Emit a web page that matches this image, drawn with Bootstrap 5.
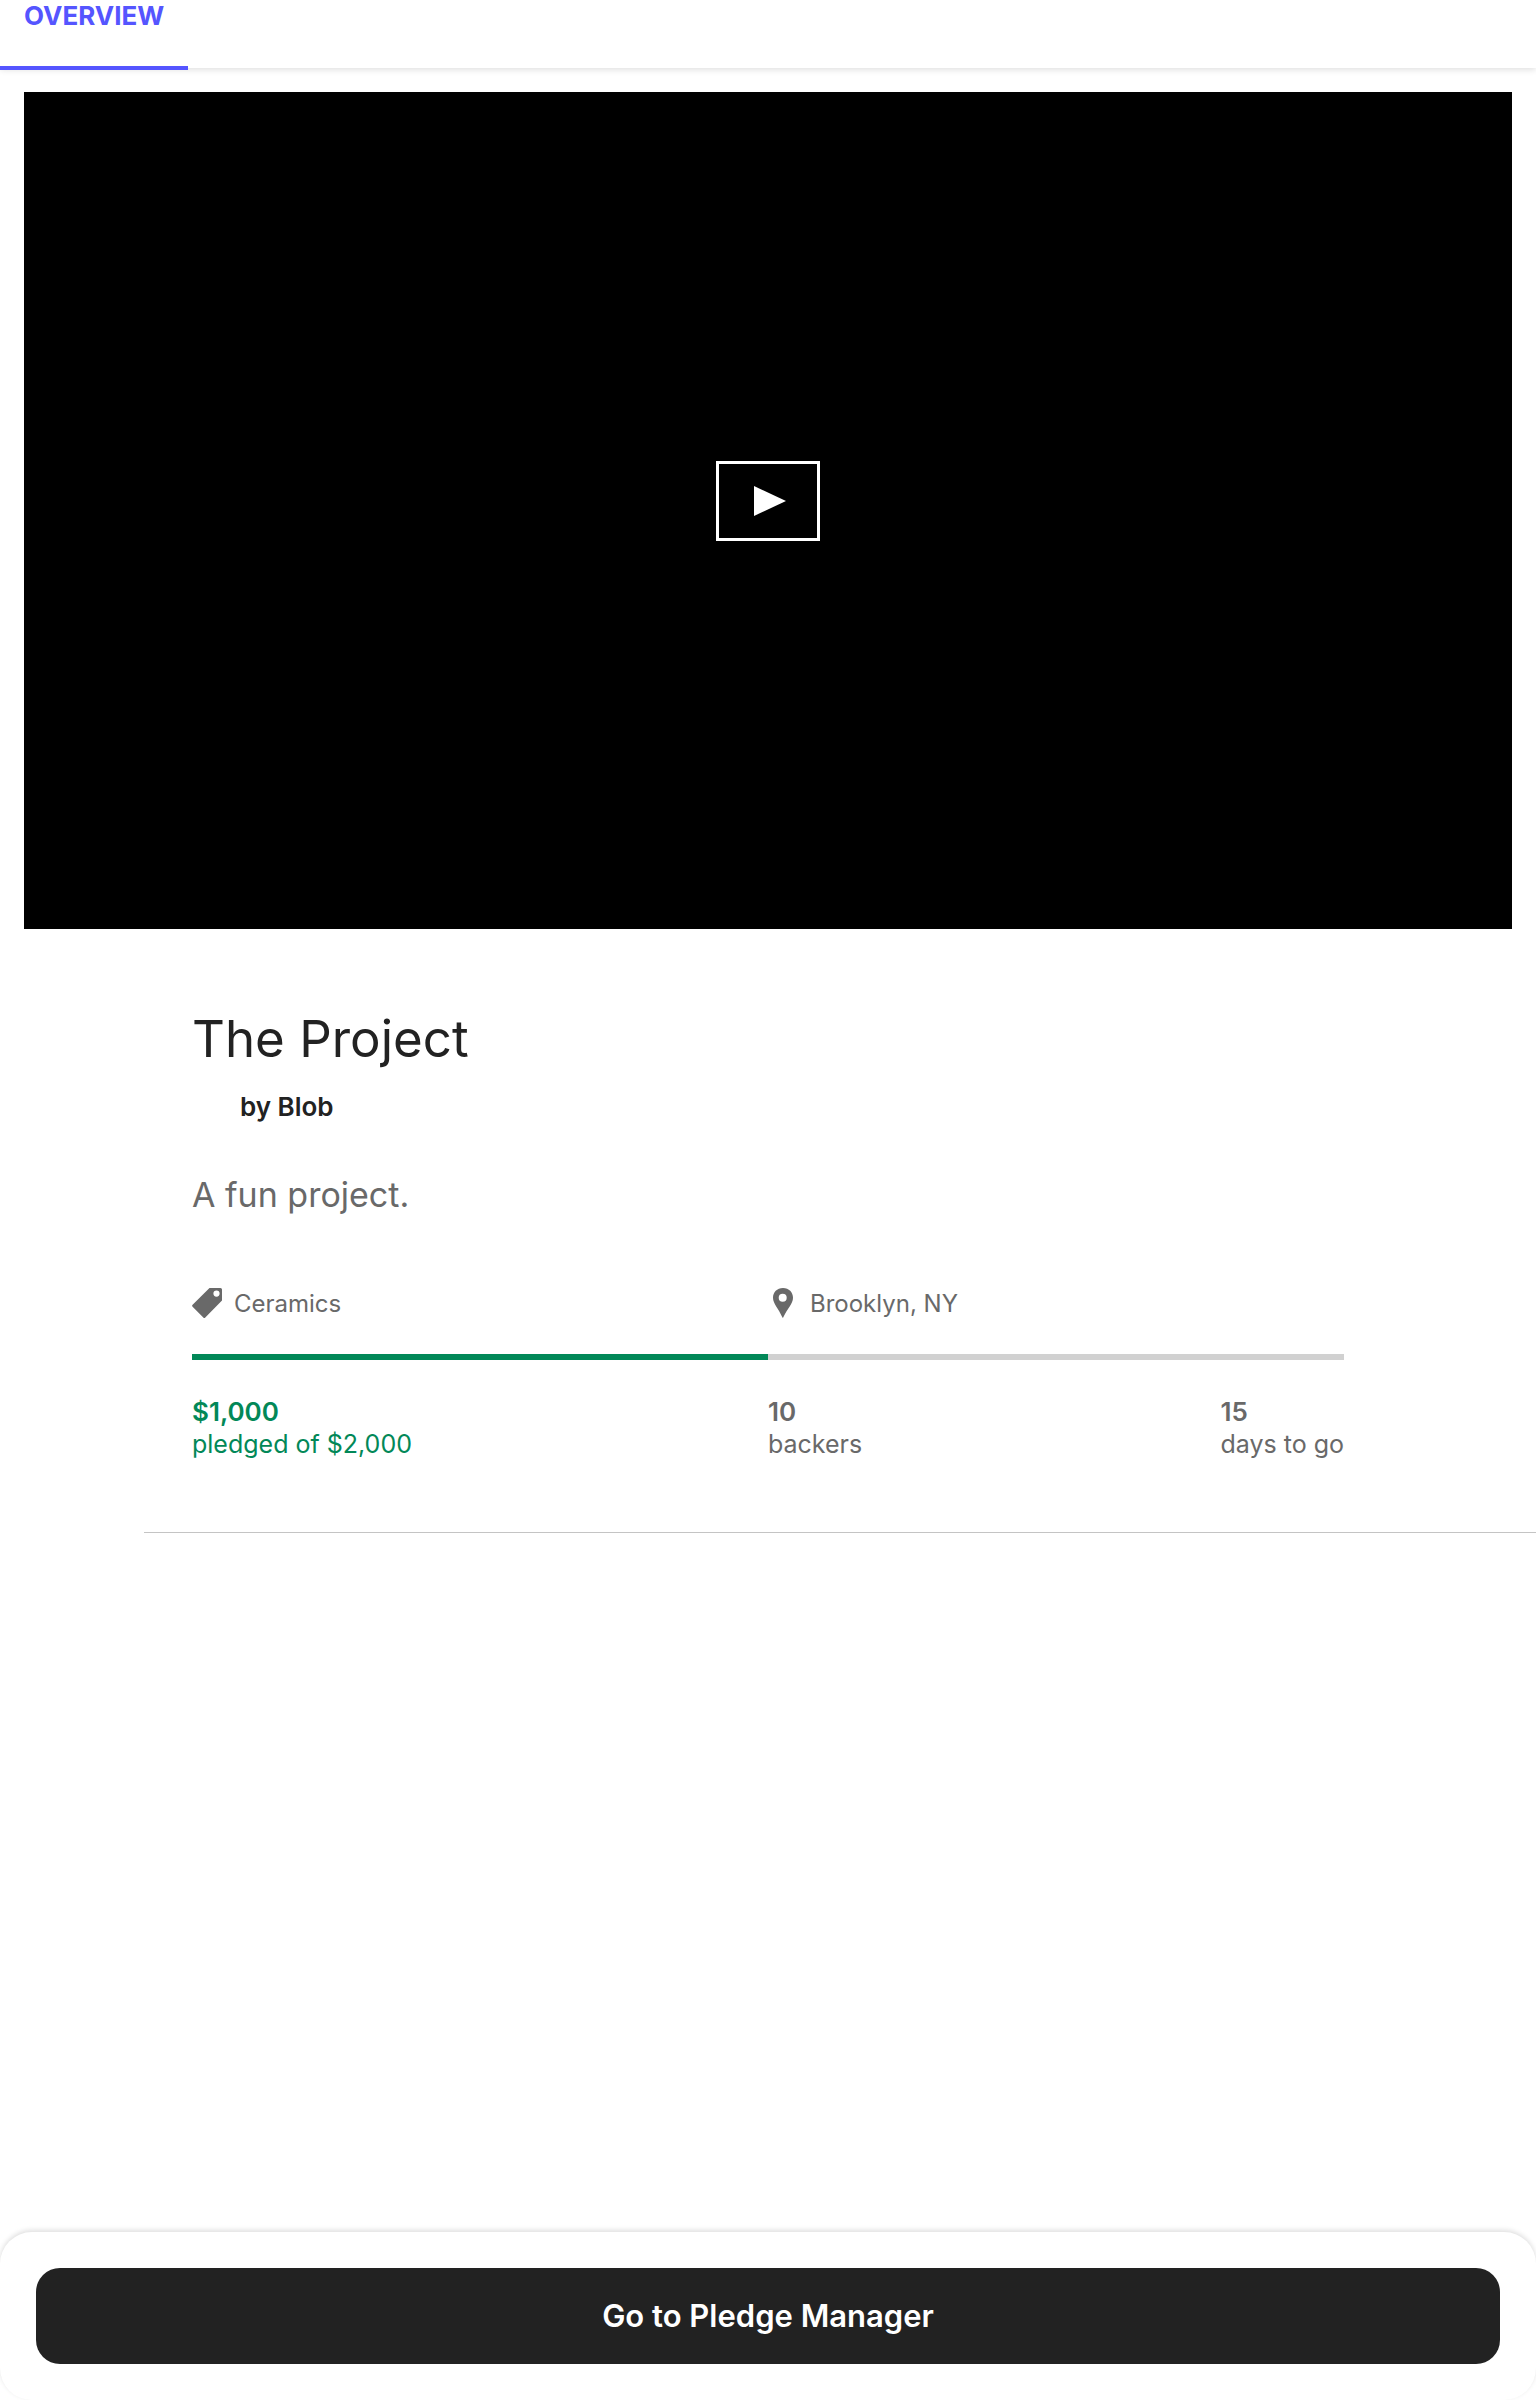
<!DOCTYPE html>
<html lang="en">
<head>
<meta charset="utf-8">
<meta name="viewport" content="width=device-width, initial-scale=1">
<title>The Project</title>
<link href="https://cdn.jsdelivr.net/npm/bootstrap@5.3.0/dist/css/bootstrap.min.css" rel="stylesheet">
<style>
  body { font-family: Inter, "Liberation Sans", sans-serif; font-size: 25px; line-height: 32px; color: #222; background: #fff; }
  .tabs-bar { height: 68px; box-shadow: 0 2px 6px rgba(0, 0, 0, .12); }
  .tab-link { height: 70px; padding: 0 24px; border-bottom: 4px solid #5555ff; color: #5555ff; font-size: 26px; text-decoration: none; }
  .video-wrap { padding: 24px 24px 0; }
  .video-overlay { padding-bottom: 20px; }
  .play-btn { width: 104px; height: 80px; border: 3px solid #fff; border-radius: 0; background: #000; }
  .play-btn svg { margin-left: 4px; }
  .summary { padding: 76px 12.5% 72px; }
  .project-title { font-size: 51px; line-height: 68px; margin-bottom: 18px; }
  .avatar-slot { width: 36px; height: 32px; }
  .creator-row, .meta-item { gap: 12px; }
  .creator-row { margin-bottom: 50px; }
  .strong-text { font-size: 26px; font-weight: 600; }
  .blurb { font-size: 34px; line-height: 44px; margin-bottom: 71px; }
  .muted-text { color: #696969; }
  .meta-item { font-size: 24px; line-height: 32px; }
  .funding { height: 6px; margin: 34px 0 36px; border-radius: 0; background: #d1d1d1; }
  .funding .progress-bar { background: #028858; }
  .pledged { color: #028858; }
  .divider { margin: 0 0 0 9.375%; border-color: #c4c4c4; opacity: 1; }
  .cta-panel { padding: 36px; border-radius: 32px; background: #fff; box-shadow: 0 -2px 5px rgba(0, 0, 0, .13); }
  .cta-btn, .cta-btn:hover { height: 96px; border: 0; border-radius: 24px; background: #222; color: #fff; font-size: 31px; }
</style>
</head>
<body class="d-flex flex-column min-vh-100">
<nav class="tabs-bar d-flex" aria-label="Project sections">
  <a class="tab-link fw-bold" href="#overview" aria-current="page">OVERVIEW</a>
</nav>
<main id="overview">
  <div class="video-wrap">
    <div class="ratio ratio-16x9 bg-black">
      <div class="video-overlay d-flex align-items-center justify-content-center">
        <button class="play-btn btn p-0 d-flex align-items-center justify-content-center" type="button" aria-label="Play video">
          <svg width="32" height="30" viewBox="0 0 32 30" aria-hidden="true"><path d="M0 0L32 15L0 30Z" fill="#fff"/></svg>
        </button>
      </div>
    </div>
  </div>
  <section class="summary">
    <h1 class="project-title fw-normal">The Project</h1>
    <div class="creator-row d-flex">
      <span class="avatar-slot"></span>
      <span class="strong-text">by Blob</span>
    </div>
    <p class="blurb muted-text">A fun project.</p>
    <div class="row g-0 muted-text">
      <div class="col-6 meta-item d-flex">
        <svg width="30" height="30" viewBox="0 0 30 30" aria-hidden="true"><path fill="#696969" fill-rule="evenodd" d="M17.5 0H28.500Q30 0 30 1.500V12.500L13.300 29.400Q12.300 30.400 11.300 29.400L.6 18.700Q-.4 17.700 .6 16.700ZM24.500 2.500A3.100 3.100 0 1 0 24.500 8.700A3.100 3.100 0 1 0 24.500 2.500Z"/></svg>
        <span>Ceramics</span>
      </div>
      <div class="col-6 meta-item d-flex">
        <svg width="30" height="30" viewBox="0 0 30 30" aria-hidden="true"><path fill="#696969" fill-rule="evenodd" d="M15 0C9 0 5 4.300 5 9.700C5 15.500 10.500 20.500 14.300 29.200Q14.800 30.400 15.300 29.200C19.500 20.500 25 15.500 25 9.700C25 4.300 21 0 15 0ZM14.700 5.700A4 4 0 1 1 14.700 13.700A4 4 0 1 1 14.700 5.700Z"/></svg>
        <span>Brooklyn, NY</span>
      </div>
    </div>
    <div class="progress funding" role="progressbar" aria-label="Funding" aria-valuenow="50" aria-valuemin="0" aria-valuemax="100">
      <div class="progress-bar" style="width: 50%"></div>
    </div>
    <div class="row g-0 muted-text">
      <div class="col-6 pledged">
        <div class="strong-text">$1,000</div>
        <div>pledged of $2,000</div>
      </div>
      <div class="col-6 d-flex justify-content-between">
        <div>
          <div class="strong-text">10</div>
          <div>backers</div>
        </div>
        <div>
          <div class="strong-text">15</div>
          <div>days to go</div>
        </div>
      </div>
    </div>
  </section>
  <hr class="divider">
</main>
<footer class="cta-panel mt-auto">
  <button class="cta-btn btn w-100 fw-semibold" type="button">Go to Pledge Manager</button>
</footer>
</body>
</html>
